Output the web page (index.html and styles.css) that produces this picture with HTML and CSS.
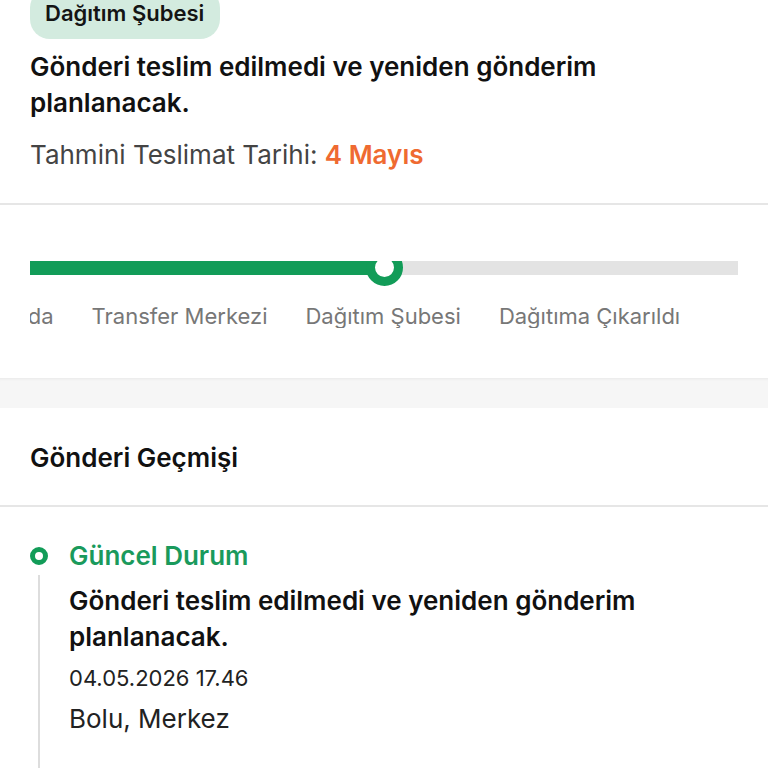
FILE: index.html
```html
<!DOCTYPE html>
<html lang="tr">
<head>
<meta charset="utf-8">
<title>Gönderi Takip</title>
<link rel="stylesheet" href="styles.css">
</head>
<body>
<section class="summary">
  <div class="badge">Dağıtım Şubesi</div>
  <h1 class="summary-title">Gönderi teslim edilmedi ve yeniden gönderim planlanacak.</h1>
  <p class="eta">Tahmini Teslimat Tarihi: <span class="eta-date">4 Mayıs</span></p>
</section>

<section class="progress">
  <div class="progress-clip">
    <div class="progress-track">
      <div class="bar">
        <div class="bar-done"></div>
        <div class="bar-todo"></div>
        <div class="bar-knob"></div>
      </div>
      <div class="steps">
        <span class="step step-first">Yolda</span>
        <span class="step">Transfer Merkezi</span>
        <span class="step">Dağıtım Şubesi</span>
        <span class="step">Dağıtıma Çıkarıldı</span>
      </div>
    </div>
  </div>
</section>

<div class="spacer"></div>

<section class="history">
  <h2 class="history-title">Gönderi Geçmişi</h2>
  <div class="timeline">
    <div class="event">
      <div class="event-rail">
        <span class="event-dot"></span>
        <span class="event-line"></span>
      </div>
      <div class="event-body">
        <div class="event-status">Güncel Durum</div>
        <div class="event-desc">Gönderi teslim edilmedi ve yeniden gönderim planlanacak.</div>
        <div class="event-date">04.05.2026 17.46</div>
        <div class="event-place">Bolu, Merkez</div>
      </div>
    </div>
  </div>
</section>
</body>
</html>
```

FILE: styles.css
```css
* {
  box-sizing: border-box;
}

html, body {
  margin: 0;
  padding: 0;
  background: #ffffff;
  height: 768px;
  overflow: hidden;
}

body {
  font-family: "Inter", "Noto Sans", sans-serif;
  color: #111111;
}

.summary {
  padding: 0 30px 30px 30px;
  border-bottom: 2px solid #e6e6e6;
}

.badge {
  display: inline-block;
  margin-top: -12px;
  padding: 12px 16px 13px 15px;
  line-height: 26px;
  font-size: 22px;
  font-weight: 600;
  color: #141414;
  background: #d3ebdf;
  border-radius: 20px;
}

.summary-title {
  margin: 10px 0 0 0;
  width: 640px;
  font-size: 26px;
  line-height: 36px;
  font-weight: 600;
  color: #111111;
}

.eta {
  margin: 16px 0 0 0;
  font-size: 26px;
  line-height: 36px;
  color: #444444;
}

.eta-date {
  color: #ef6a31;
  font-weight: 600;
}

.progress {
  padding: 56px 30px 50px 30px;
}

.progress-clip {
  overflow: hidden;
}

.progress-track {
  display: flex;
  flex-direction: column;
  gap: 29px;
}

.bar {
  position: relative;
  display: flex;
  height: 14px;
}

.bar-done {
  width: 355px;
  background: #129c58;
}

.bar-todo {
  flex: 1;
  background: #e3e3e3;
}

.bar-knob {
  position: absolute;
  left: 336px;
  top: -12px;
  width: 37px;
  height: 37px;
  border-radius: 50%;
  border: 9px solid #129c58;
  background: #ffffff;
}

.steps {
  display: flex;
  gap: 38px;
  white-space: nowrap;
  font-size: 22px;
  line-height: 24px;
  color: #777777;
}

.step-first {
  margin-left: -34px;
}

.spacer {
  height: 30px;
  background: #f6f6f6;
  box-shadow: inset 0 3px 3px -2px rgba(0, 0, 0, 0.06);
}

.history-title {
  margin: 0;
  padding: 32px 30px 29px 30px;
  font-size: 26px;
  line-height: 36px;
  font-weight: 600;
  color: #111111;
  border-bottom: 2px solid #e6e6e6;
}

.timeline {
  padding: 31px 30px 0 30px;
}

.event {
  display: flex;
  gap: 22px;
}

.event-rail {
  width: 17px;
  display: flex;
  flex-direction: column;
  align-items: center;
  padding-top: 9px;
}

.event-dot {
  width: 18px;
  height: 18px;
  border-radius: 50%;
  border: 5px solid #129c58;
  background: #ffffff;
}

.event-line {
  width: 2px;
  height: 196px;
  margin-top: 10px;
  background: #dddddd;
}

.event-body {
  flex: 1;
}

.event-status {
  font-size: 26px;
  line-height: 36px;
  font-weight: 600;
  color: #1a9a5c;
}

.event-desc {
  margin-top: 9px;
  width: 640px;
  font-size: 26px;
  line-height: 36px;
  font-weight: 600;
  color: #111111;
}

.event-date {
  margin-top: 8px;
  font-size: 22px;
  line-height: 30px;
  color: #222222;
}

.event-place {
  margin-top: 8px;
  font-size: 26px;
  line-height: 36px;
  color: #222222;
}
```
